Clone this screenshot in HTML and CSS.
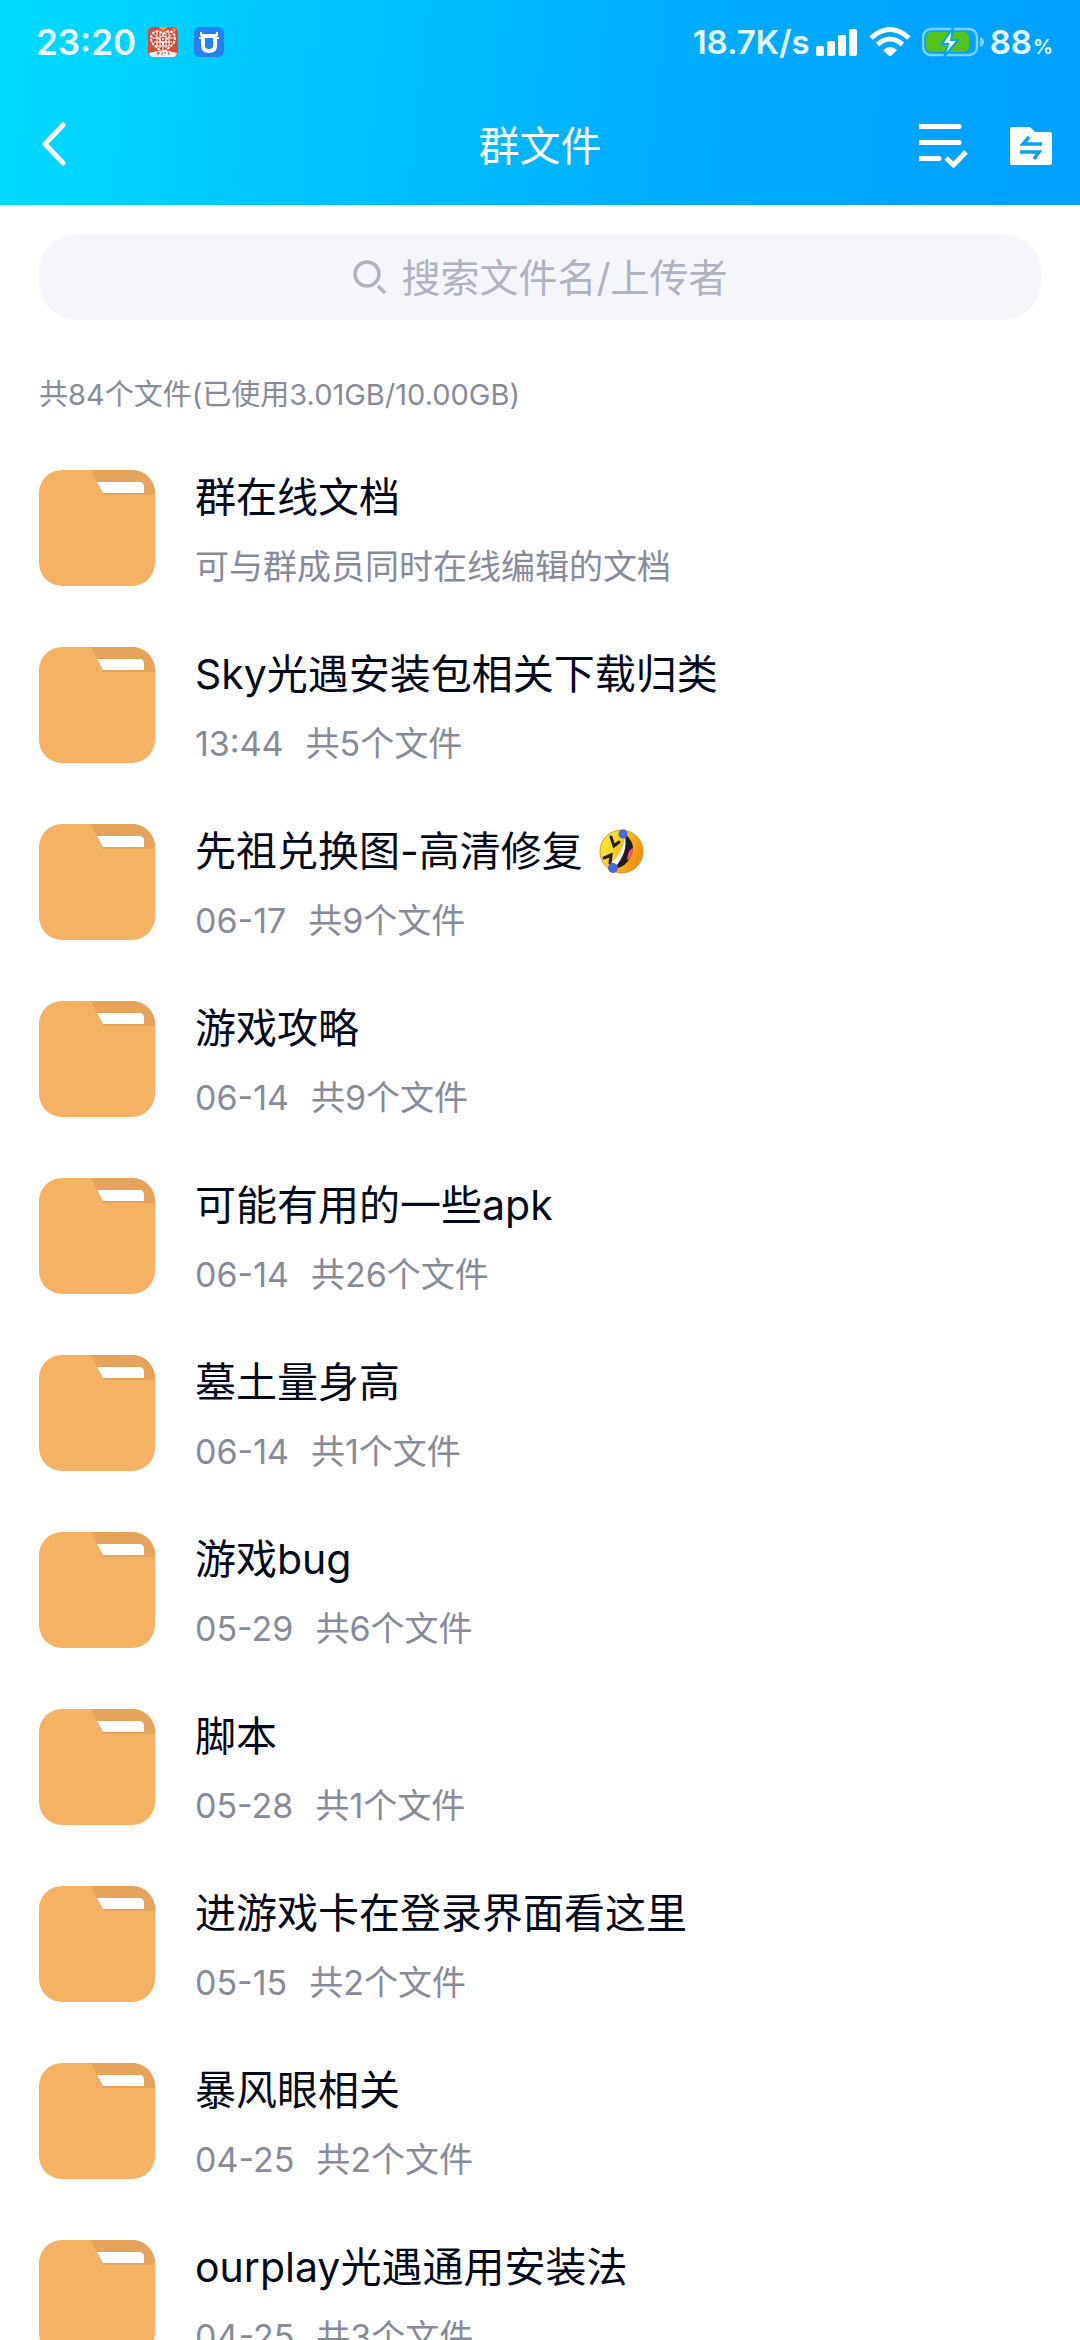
FILE: index.html
```html
<!DOCTYPE html>
<html lang="zh-CN">
<head>
<meta charset="utf-8">
<meta name="viewport" content="width=device-width, initial-scale=1">
<title>群文件</title>
<link rel="stylesheet" href="styles.css">
</head>
<body>
<svg class="defs" aria-hidden="true">
  <symbol id="folder" viewBox="0 0 116 116">
    <rect width="116" height="116" rx="23" fill="#f6b264"/>
    <path d="M52 0H93A23 23 0 0 1 116 23V25H64Z" fill="#e6a35c"/>
    <path d="M58 12H100Q105 12 105 17V23H64Z" fill="#fff"/>
  </symbol>
</svg>

<header class="top">
  <div class="status">
    <div class="status-left">
      <span class="clock">23:20</span>
      <svg class="app" viewBox="0 0 30 30" aria-hidden="true">
        <rect width="30" height="30" rx="5" fill="#dc4a35"/>
        <path d="M10 0H20L15 4Z" fill="#f39a33"/>
        <circle cx="26" cy="3" r="2" fill="#f08a30"/>
        <path d="M15 26L5 17Q1 11 5 6Q10 2 15 7Q20 2 25 6Q29 11 25 17Z" fill="#d5422f" stroke="#fff" stroke-width="2" stroke-dasharray="3 1"/>
        <g fill="none" stroke="#fff" stroke-width="1">
          <path d="M4 11H26M6 15H24M9 19H21M9 5V19M21 5V19M15 7V25M12 6V21M18 6V21M6 7L16 18M24 7L14 18"/>
        </g>
        <circle cx="15" cy="12" r="3" fill="#dc4a35" stroke="#fff"/>
        <circle cx="15" cy="12" r="1" fill="#fff"/>
        <path d="M1 26Q15 21 29 26Q28 30 25 30H5Q2 30 1 26Z" fill="#ffeee8"/>
        <path d="M9 26H12M10 25V28M14 25V28M16 26H18M20 25L21 28" stroke="#c55446" fill="none"/>
      </svg>
      <svg class="app app-blue" viewBox="0 0 30 30" aria-hidden="true">
        <rect width="30" height="30" rx="6" fill="#277ff5"/>
        <path d="M9 9H21V19Q21 24 15 24Q9 24 9 19Z" fill="none" stroke="#fff" stroke-width="4"/>
        <path d="M7 5V9M23 5V9M5 11H9M21 11H25" stroke="#fff" stroke-width="2" fill="none"/>
      </svg>
    </div>
    <div class="status-right">
      <span class="net">18.7K/s</span>
      <svg class="signal" viewBox="0 0 42 28" aria-hidden="true" fill="#fff">
        <rect x="0" y="18" width="8" height="10" rx="2"/><rect x="11" y="13" width="8" height="15" rx="2"/>
        <rect x="22" y="7" width="8" height="21" rx="2"/><rect x="33" y="1" width="8" height="27" rx="2"/>
      </svg>
      <svg class="wifi" viewBox="0 0 42 30" aria-hidden="true">
        <path d="M2 11Q21 -6 40 11" fill="none" stroke="#fff" stroke-width="5"/>
        <path d="M8.500 17.500Q21 6.500 33.500 17.500" fill="none" stroke="#fff" stroke-width="5"/>
        <path d="M14 23Q21 17 28 23L23 28Q21 30 19 28Z" fill="#fff"/>
      </svg>
      <svg class="battery" viewBox="0 0 62 30" aria-hidden="true">
        <rect x="1" y="2" width="54" height="26" rx="8" fill="none" stroke="#7fd0ff" stroke-width="2.500"/>
        <rect x="4" y="5" width="43" height="20" rx="5" fill="#52c41a"/>
        <path d="M58 10Q62 11 62 15Q62 19 58 20Z" fill="#7fd0ff"/>
        <path d="M31 1L20 17H26L22 30L36 13H29Z" fill="#fff" stroke="#07a2e8" stroke-width="2"/>
      </svg>
      <span class="level">88<small class="percent">%</small></span>
    </div>
  </div>
  <nav class="nav">
    <button class="icon-btn back" type="button" aria-label="返回">
      <svg width="30" height="46" viewBox="0 0 30 46"><path d="M24 3L6 22L24 41" fill="none" stroke="#fff" stroke-width="5" stroke-linecap="round" stroke-linejoin="round"/></svg>
    </button>
    <h1 class="nav-title">群文件</h1>
    <div class="nav-actions">
      <button class="icon-btn" type="button" aria-label="多选">
        <svg width="49" height="46" viewBox="0 0 49 46"><path d="M1 4.500H40M1 20.500H40M1 36.500H20" stroke="#fff" stroke-width="5" stroke-linecap="round" fill="none"/><path d="M27 36L34.500 43L47 30" fill="none" stroke="#fff" stroke-width="5"/></svg>
      </button>
      <button class="icon-btn" type="button" aria-label="传输列表">
        <svg width="42" height="46" viewBox="0 0 42 46"><path d="M2 5H20L25 10H40Q42 10 42 12V41Q42 43 40 43H2Q0 43 0 41V7Q0 5 2 5Z" fill="#fff"/><path d="M32 22H13L19 15M10 30H29L24 37" fill="none" stroke="#03a2f5" stroke-width="3.500"/></svg>
      </button>
    </div>
  </nav>
</header>

<main>
  <form class="search" role="search">
    <label class="search-label" for="q" aria-label="搜索">
      <svg width="34" height="36" viewBox="0 0 34 36"><circle cx="14" cy="15" r="12" fill="none" stroke="#b0b2bf" stroke-width="3.500"/><path d="M25 27L32 34" stroke="#b0b2bf" stroke-width="3.500"/></svg>
    </label>
    <input class="search-input" id="q" type="text" placeholder="搜索文件名/上传者">
  </form>
  <p class="usage">共84个文件(已使用3.01GB/10.00GB)</p>

  <ul class="files">
    <li class="file"><svg class="folder"><use href="#folder"/></svg><div class="info"><h2 class="name">群在线文档</h2><p class="meta">可与群成员同时在线编辑的文档</p></div></li>
    <li class="file"><svg class="folder"><use href="#folder"/></svg><div class="info"><h2 class="name">Sky光遇安装包相关下载归类</h2><p class="meta"><span>13:44</span><span>共5个文件</span></p></div></li>
    <li class="file"><svg class="folder"><use href="#folder"/></svg><div class="info"><h2 class="name">先祖兑换图-高清修复
      <svg class="emoji" viewBox="0 0 45 45" role="img" aria-label="笑得满地打滚">
        <defs><linearGradient id="face" x1="0" y1="0" x2="1" y2="0.400"><stop offset="0.300" stop-color="#fbe02c"/><stop offset="1" stop-color="#f78d12"/></linearGradient></defs>
        <circle cx="22.500" cy="22.500" r="21.500" fill="url(#face)" stroke="#d9992a"/>
        <path d="M26 5Q38 15 32 27Q27 38 16 40Q26 24 26 5Z" fill="#221d23"/>
        <path d="M26 7Q29 24 16 38Q13 36 13 33Q24 24 26 7Z" fill="#fff"/>
        <path d="M34 19Q29 20 28 31Q34 29 34 19Z" fill="#ee5b67"/>
        <path d="M12 8L15 17L20 13M5 29L12 26L11 34" fill="none" stroke="#221d23" stroke-width="3" stroke-linecap="round"/>
        <circle cx="24" cy="5" r="4.500" fill="#4b68dc"/><circle cx="14" cy="39" r="5" fill="#4b68dc"/>
      </svg></h2><p class="meta"><span>06-17</span><span>共9个文件</span></p></div></li>
    <li class="file"><svg class="folder"><use href="#folder"/></svg><div class="info"><h2 class="name">游戏攻略</h2><p class="meta"><span>06-14</span><span>共9个文件</span></p></div></li>
    <li class="file"><svg class="folder"><use href="#folder"/></svg><div class="info"><h2 class="name">可能有用的一些apk</h2><p class="meta"><span>06-14</span><span>共26个文件</span></p></div></li>
    <li class="file"><svg class="folder"><use href="#folder"/></svg><div class="info"><h2 class="name">墓土量身高</h2><p class="meta"><span>06-14</span><span>共1个文件</span></p></div></li>
    <li class="file"><svg class="folder"><use href="#folder"/></svg><div class="info"><h2 class="name">游戏bug</h2><p class="meta"><span>05-29</span><span>共6个文件</span></p></div></li>
    <li class="file"><svg class="folder"><use href="#folder"/></svg><div class="info"><h2 class="name">脚本</h2><p class="meta"><span>05-28</span><span>共1个文件</span></p></div></li>
    <li class="file"><svg class="folder"><use href="#folder"/></svg><div class="info"><h2 class="name">进游戏卡在登录界面看这里</h2><p class="meta"><span>05-15</span><span>共2个文件</span></p></div></li>
    <li class="file"><svg class="folder"><use href="#folder"/></svg><div class="info"><h2 class="name">暴风眼相关</h2><p class="meta"><span>04-25</span><span>共2个文件</span></p></div></li>
    <li class="file"><svg class="folder"><use href="#folder"/></svg><div class="info"><h2 class="name">ourplay光遇通用安装法</h2><p class="meta"><span>04-25</span><span>共3个文件</span></p></div></li>
  </ul>
</main>
</body>
</html>
```

FILE: styles.css
```css
* {
  box-sizing: border-box;
  margin: 0;
  padding: 0;
}

body {
  background: #fff;
  color: #03081a;
  font-family: Inter, "Noto Sans CJK SC", sans-serif;
  font-weight: 400;
}

svg {
  display: block;
  flex: none;
}

.defs {
  display: none;
}

.top {
  background: linear-gradient(96deg, #00dcff 0%, #00c3ff 30%, #00adff 62%, #00a4ff 85%, #00a0ff 100%);
  color: #fff;
}

.status {
  display: flex;
  justify-content: space-between;
  height: 84px;
  padding: 0 27px 0 36px;
}

.status-left,
.status-right {
  display: flex;
  align-items: center;
  color: #e6fbff;
  font-weight: 600;
}

.clock {
  font-size: 35px;
}

.app {
  width: 30px;
  height: 30px;
  margin-left: 12px;
}

.app-blue {
  margin-left: 16px;
}

.net,
.level {
  font-size: 33px;
}

.signal {
  width: 42px;
  height: 28px;
  margin-left: 6px;
}

.wifi {
  width: 42px;
  height: 30px;
  margin-left: 11px;
}

.battery {
  width: 62px;
  height: 30px;
  margin: 0 6px 0 11px;
}

.percent {
  margin-left: 1px;
  font-size: 20px;
}

.nav {
  display: grid;
  grid-template-columns: 1fr auto 1fr;
  align-items: center;
  height: 121px;
  padding: 0 28px;
}

.nav-title {
  padding-bottom: 4px;
  font-size: 41px;
  font-weight: 400;
}

.nav-actions {
  display: flex;
  justify-content: flex-end;
  gap: 42px;
}

.icon-btn {
  justify-self: start;
  border: 0;
  background: none;
  cursor: pointer;
}

.back {
  padding-left: 11px;
}

.search {
  display: flex;
  align-items: center;
  justify-content: center;
  gap: 15px;
  height: 86px;
  margin: 29px 39px 0;
  border-radius: 38px;
  background: #f5f6fa;
}

.search-input {
  width: 326px;
  border: 0;
  outline: 0;
  background: none;
  color: #03081a;
  font: inherit;
  font-size: 39px;
}

.search-input::placeholder {
  color: #b0b2bf;
  opacity: 1;
}

.usage {
  margin: 50px 39px;
  color: #878b99;
  font-size: 29px;
  line-height: 50px;
}

.files {
  display: flex;
  flex-direction: column;
  gap: 53px;
  list-style: none;
}

.file {
  display: flex;
  gap: 40px;
  padding: 0 39px;
}

.folder {
  width: 116px;
  height: 116px;
}

.info {
  display: flex;
  flex-direction: column;
  gap: 16px;
}

.name {
  display: flex;
  align-items: center;
  gap: 16px;
  font-size: 41px;
  font-weight: 400;
  line-height: 54px;
}

.emoji {
  width: 45px;
  height: 45px;
}

.meta {
  display: flex;
  gap: 22px;
  color: #878b99;
  font-size: 34px;
  line-height: 54px;
}
```
